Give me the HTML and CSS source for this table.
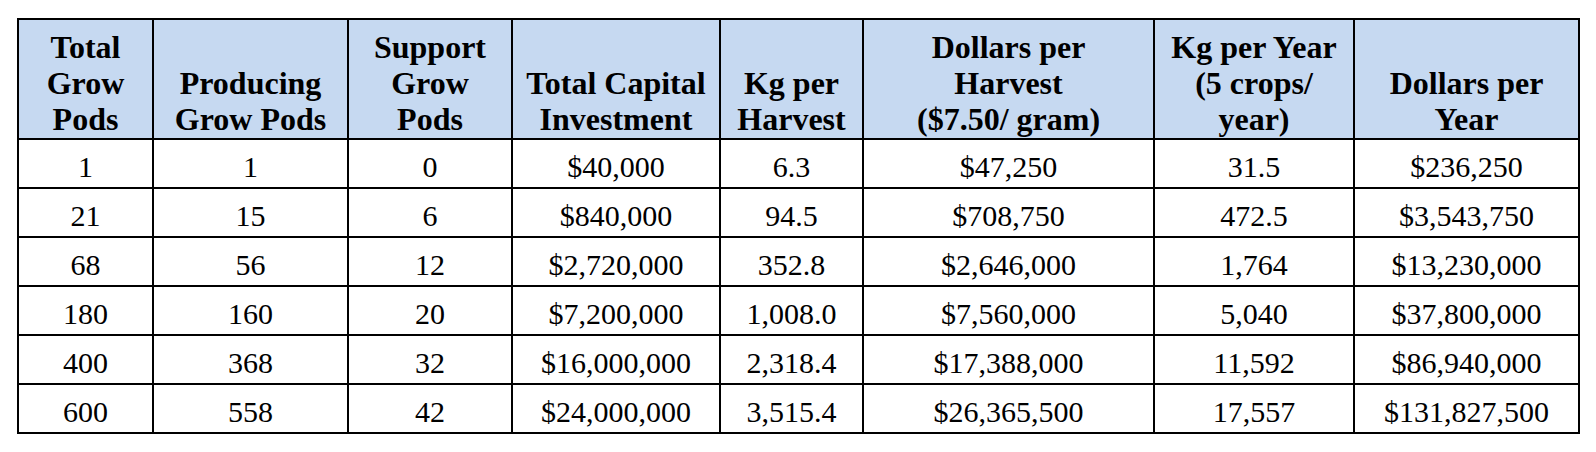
FILE: index.html
```html
<!DOCTYPE html>
<html lang="en">
<head>
<meta charset="utf-8">
<title>Grow Pod Economics</title>
<link rel="stylesheet" href="styles.css">
</head>
<body>
<div class="pods" role="table">
  <div class="head" role="columnheader">Total<br>Grow<br>Pods</div>
  <div class="head" role="columnheader">Producing<br>Grow Pods</div>
  <div class="head" role="columnheader">Support<br>Grow<br>Pods</div>
  <div class="head" role="columnheader">Total Capital<br>Investment</div>
  <div class="head" role="columnheader">Kg per<br>Harvest</div>
  <div class="head" role="columnheader">Dollars per<br>Harvest<br>($7.50/ gram)</div>
  <div class="head" role="columnheader">Kg per Year<br>(5 crops/<br>year)</div>
  <div class="head" role="columnheader">Dollars per<br>Year</div>

  <div class="cell">1</div><div class="cell">1</div><div class="cell">0</div><div class="cell">$40,000</div><div class="cell">6.3</div><div class="cell">$47,250</div><div class="cell">31.5</div><div class="cell">$236,250</div>
  <div class="cell">21</div><div class="cell">15</div><div class="cell">6</div><div class="cell">$840,000</div><div class="cell">94.5</div><div class="cell">$708,750</div><div class="cell">472.5</div><div class="cell">$3,543,750</div>
  <div class="cell">68</div><div class="cell">56</div><div class="cell">12</div><div class="cell">$2,720,000</div><div class="cell">352.8</div><div class="cell">$2,646,000</div><div class="cell">1,764</div><div class="cell">$13,230,000</div>
  <div class="cell">180</div><div class="cell">160</div><div class="cell">20</div><div class="cell">$7,200,000</div><div class="cell">1,008.0</div><div class="cell">$7,560,000</div><div class="cell">5,040</div><div class="cell">$37,800,000</div>
  <div class="cell">400</div><div class="cell">368</div><div class="cell">32</div><div class="cell">$16,000,000</div><div class="cell">2,318.4</div><div class="cell">$17,388,000</div><div class="cell">11,592</div><div class="cell">$86,940,000</div>
  <div class="cell">600</div><div class="cell">558</div><div class="cell">42</div><div class="cell">$24,000,000</div><div class="cell">3,515.4</div><div class="cell">$26,365,500</div><div class="cell">17,557</div><div class="cell">$131,827,500</div>
</div>
</body>
</html>
```
FILE: styles.css
```css
html, body {
  margin: 0;
  padding: 0;
  background: #ffffff;
}

body {
  padding: 18px 0 0 17px;
  font-family: "Liberation Serif", "Times New Roman", serif;
  color: #000000;
}

.pods {
  display: grid;
  grid-template-columns: 135px 195px 164px 208px 143px 291px 200px 225px;
  grid-template-rows: 120px repeat(6, 49px);
  width: max-content;
  border-left: 2px solid #000000;
  border-top: 2px solid #000000;
}

.head,
.cell {
  box-sizing: border-box;
  border-right: 2px solid #000000;
  border-bottom: 2px solid #000000;
  display: flex;
  flex-direction: column;
  justify-content: flex-end;
  align-items: center;
  text-align: center;
}

.head {
  background: #c6d9f1;
  font-weight: bold;
  font-size: 32px;
  line-height: 36px;
  padding-bottom: 1px;
}

.cell {
  font-size: 30px;
  line-height: 36px;
  padding-bottom: 2px;
}
```
